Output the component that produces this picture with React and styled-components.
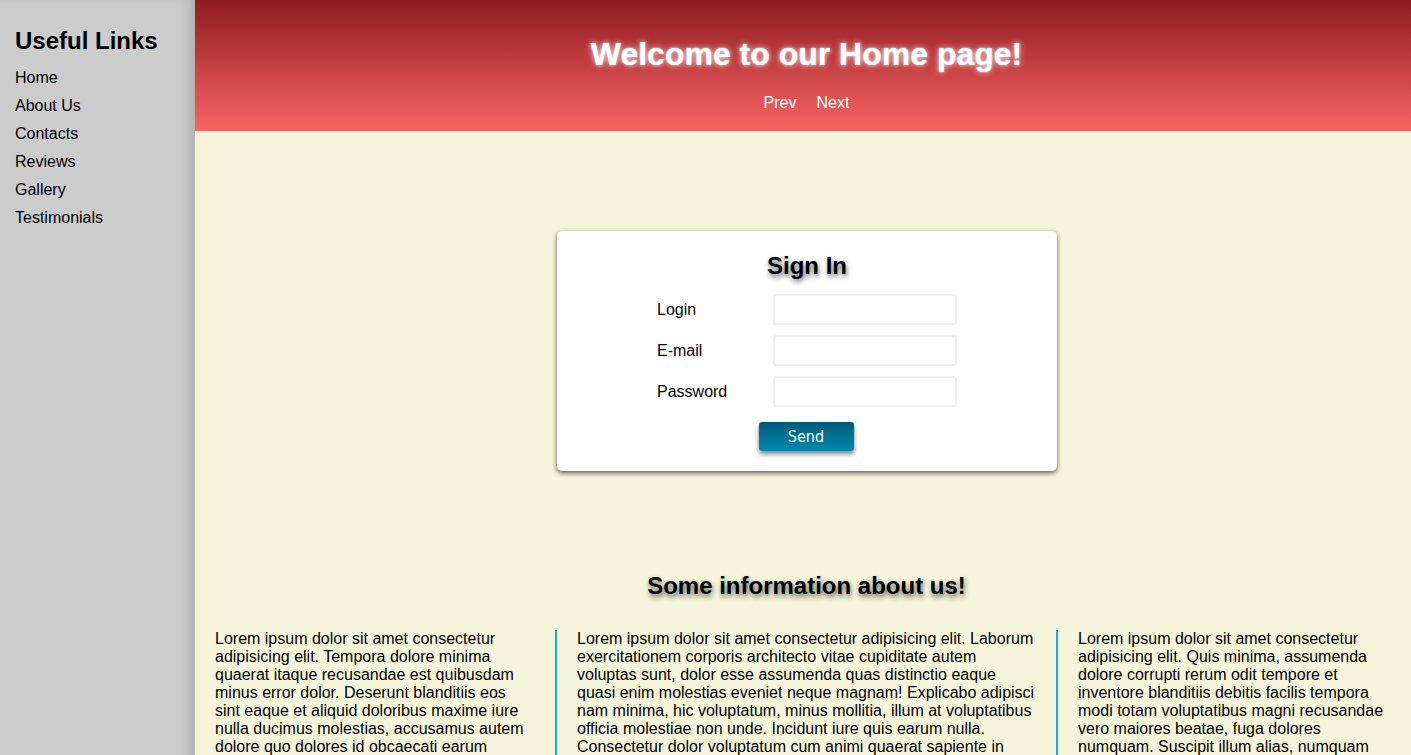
import React from "react";
import styled, { createGlobalStyle } from "styled-components";

const Global = createGlobalStyle`
  html, body { margin: 0; padding: 0; }
  body { font-family: "Liberation Sans", Arial, sans-serif; background: #f5f5dc; color: #000; }
  * { box-sizing: border-box; }
`;

const Page = styled.div`
  display: flex;
  min-height: 100vh;
`;

const Sidebar = styled.aside`
  flex: 0 0 195px;
  background: #cccccc;
  box-shadow: inset -12px 0 14px -8px rgba(0, 0, 0, 0.18);
  padding: 27px 15px;
`;

const SideTitle = styled.h2`
  margin: 0 0 9px;
  font-size: 24px;
  line-height: 28px;
  font-weight: bold;
`;

const SideList = styled.ul`
  list-style: none;
  margin: 0;
  padding: 0;
`;

const SideLink = styled.a`
  display: block;
  font-size: 16px;
  line-height: 28px;
  color: #000;
  text-decoration: none;
`;

const Main = styled.main`
  flex: 1;
  display: flex;
  flex-direction: column;
  background: #f5f5dc;
`;

const Header = styled.header`
  height: 131px;
  background: linear-gradient(to bottom, #8f1c1f, #f96464);
  padding: 36px 0 0 7px;
  text-align: center;
`;

const Title = styled.h1`
  margin: 0;
  font-size: 32px;
  line-height: 37px;
  font-weight: bold;
  color: #fff;
  text-shadow: 0 0 6px rgba(255, 255, 255, 0.85), 0 0 2px rgba(255, 255, 255, 0.7);
`;

const Nav = styled.nav`
  margin-top: 21px;
  display: flex;
  justify-content: center;
  gap: 20px;
`;

const NavLink = styled.a`
  color: #fff;
  font-size: 16px;
  line-height: 18px;
  text-decoration: none;
`;

const Card = styled.section`
  align-self: center;
  width: 500px;
  margin: 100px 0 0 8px;
  background: #fff;
  border-radius: 5px;
  box-shadow: 0 2px 5px rgba(0, 0, 0, 0.65);
  padding: 21px 0 20px;
  display: flex;
  flex-direction: column;
  align-items: center;
`;

const ShadowHeading = styled.h2`
  margin: 0;
  font-size: 24px;
  line-height: 28px;
  font-weight: bold;
  text-shadow: 1px 3px 5px rgba(0, 0, 0, 0.6);
`;

const Form = styled.form`
  width: 300px;
  margin-top: 14px;
  display: grid;
  grid-template-columns: 116px 184px;
  row-gap: 10px;
  align-items: center;
`;

const Label = styled.label`
  font-size: 16px;
  line-height: 18px;
`;

const Input = styled.input`
  height: 31px;
  width: 184px;
  border: 2px solid #efefef;
  border-radius: 3px;
  outline: none;
  font-size: 16px;
  padding: 2px 6px;
`;

const Send = styled.button`
  grid-column: 1 / -1;
  justify-self: center;
  margin: 5px 2px 0 0;
  width: 95px;
  height: 29px;
  border: none;
  border-radius: 3px;
  background: linear-gradient(to bottom, #005b76, #0089b0);
  color: #fff;
  font-family: "DejaVu Sans Condensed", "DejaVu Sans", sans-serif;
  font-size: 16px;
  box-shadow: 0 3px 5px rgba(0, 0, 0, 0.5);
  cursor: pointer;
`;

const InfoHeading = styled(ShadowHeading)`
  margin: 101px 0 30px;
  padding-left: 7px;
  text-align: center;
`;

const Columns = styled.div`
  display: grid;
  grid-template-columns: 360fr 501fr 355fr;
`;

const Column = styled.p`
  margin: 0;
  padding: 0 20px;
  font-size: 16px;
  line-height: 18px;
  border-left: ${(p) => (p.$divider ? "2px solid #14ace0" : "none")};
`;

const links = ["Home", "About Us", "Contacts", "Reviews", "Gallery", "Testimonials"];

const texts = [
  "Lorem ipsum dolor sit amet consectetur adipisicing elit. Tempora dolore minima quaerat itaque recusandae est quibusdam minus error dolor. Deserunt blanditiis eos sint eaque et aliquid doloribus maxime iure nulla ducimus molestias, accusamus autem dolore quo dolores id obcaecati earum voluptatem nesciunt eveniet at modi.",
  "Lorem ipsum dolor sit amet consectetur adipisicing elit. Laborum exercitationem corporis architecto vitae cupiditate autem voluptas sunt, dolor esse assumenda quas distinctio eaque quasi enim molestias eveniet neque magnam! Explicabo adipisci nam minima, hic voluptatum, minus mollitia, illum at voluptatibus officia molestiae non unde. Incidunt iure quis earum nulla. Consectetur dolor voluptatum cum animi quaerat sapiente in nobis ullam, commodi tempore eius.",
  "Lorem ipsum dolor sit amet consectetur adipisicing elit. Quis minima, assumenda dolore corrupti rerum odit tempore et inventore blanditiis debitis facilis tempora modi totam voluptatibus magni recusandae vero maiores beatae, fuga dolores numquam. Suscipit illum alias, numquam quo dolorum ad.",
];

export default function App() {
  return (
    <>
      <Global />
      <Page>
        <Sidebar>
          <SideTitle>Useful Links</SideTitle>
          <SideList>
            {links.map((l) => (
              <li key={l}>
                <SideLink href="#">{l}</SideLink>
              </li>
            ))}
          </SideList>
        </Sidebar>
        <Main>
          <Header>
            <Title>Welcome to our Home page!</Title>
            <Nav>
              <NavLink href="#">Prev</NavLink>
              <NavLink href="#">Next</NavLink>
            </Nav>
          </Header>
          <Card>
            <ShadowHeading>Sign In</ShadowHeading>
            <Form onSubmit={(e) => e.preventDefault()}>
              <Label>Login</Label>
              <Input type="text" />
              <Label>E-mail</Label>
              <Input type="email" />
              <Label>Password</Label>
              <Input type="password" />
              <Send type="submit">Send</Send>
            </Form>
          </Card>
          <InfoHeading>Some information about us!</InfoHeading>
          <Columns>
            {texts.map((t, i) => (
              <Column key={i} $divider={i > 0}>
                {t}
              </Column>
            ))}
          </Columns>
        </Main>
      </Page>
    </>
  );
}
